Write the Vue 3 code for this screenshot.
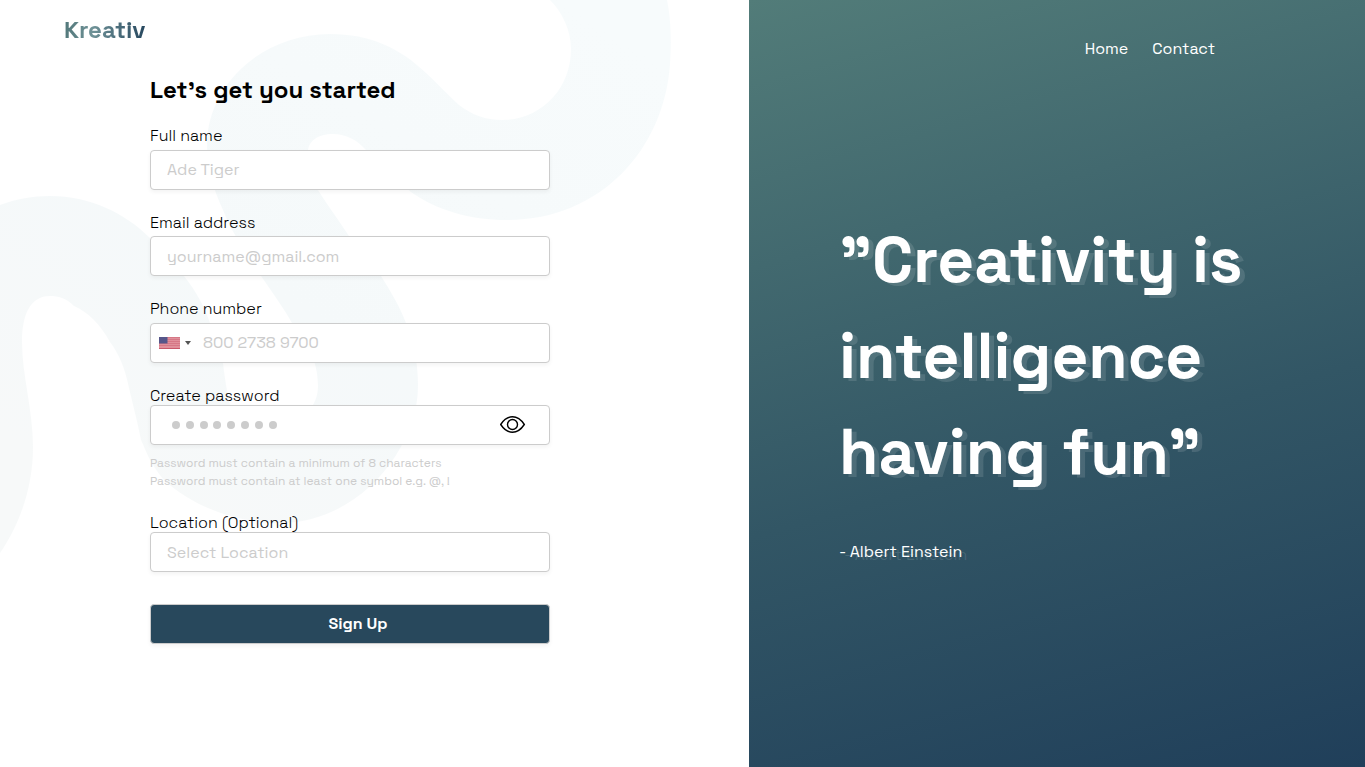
<script setup>
import { ref } from 'vue'

const fullName = ref('')
const email = ref('')
const phone = ref('')
const password = ref('')
const location = ref('')
const showPassword = ref(false)
</script>

<template>
  <div class="page">
    <section class="signup">
      <svg class="wave" width="749" height="767" viewBox="0 0 749 767" aria-hidden="true">
        <defs>
          <linearGradient id="waveFill" x1="560" y1="0" x2="200" y2="560" gradientUnits="userSpaceOnUse">
            <stop offset="0" stop-color="#f7fbfc" />
            <stop offset="0.6" stop-color="#f5f9fa" />
            <stop offset="1" stop-color="#f7f9f9" />
          </linearGradient>
        </defs>
        <path
          fill="url(#waveFill)"
          d="M0 205C16 199 33 196 50 196C90 196 125 213 150 238C163 250 175 262 184 276C196 291 204 306 210 323C216 336 220 350 223 363C225 380 227 392 230 405C236 420 250 423 275 423C305 423 318 405 318 386C318 358 305 340 292 323C285 310 272 292 261 276C245 252 231 231 223 210C214 190 207 170 207 145C207 85 262 34 330 34C370 34 400 48 426 73C440 86 446 93 459 105C472 115 486 120 502 120C540 120 571 90 571 49C571 30 562 12 550 0L667 0C670 15 672 35 670 64C664 150 600 220 507 220C470 220 436 210 411 192C395 180 380 163 366 150C356 139 345 134 333 134C318 134 308 141 308 152C308 165 313 180 318 190C328 206 340 222 349 236C360 250 372 264 381 276C391 292 400 307 406 323C414 342 418 364 418 386C418 447 360 523 280 523C235 523 190 505 163 479C148 460 146 450 141 440C137 420 133 405 129 388C125 368 119 354 110 342C100 324 88 312 74 306C66 298 58 296 50 296C30 296 22 315 22 342C22 375 33 410 33 447C33 490 18 527 0 553Z"
        />
      </svg>

      <header class="brand"><span class="logo">Kreativ</span></header>

      <form class="form" @submit.prevent>
        <h2 class="title">Let’s get you started</h2>

        <div class="field name">
          <label for="name">Full name</label>
          <div class="box"><input id="name" v-model="fullName" placeholder="Ade Tiger" /></div>
        </div>

        <div class="field email">
          <label for="email">Email address</label>
          <div class="box"><input id="email" v-model="email" placeholder="yourname@gmail.com" /></div>
        </div>

        <div class="field phone">
          <label for="phone">Phone number</label>
          <div class="box">
            <svg class="flag" width="21" height="12" viewBox="0 0 21 12" aria-hidden="true">
              <rect width="21" height="12" fill="#e0909b" />
              <path d="M0 .5H21M0 2.5H21M0 4.5H21M0 6.5H21M0 8.5H21" stroke="#d67886" />
              <path d="M0 11.5H21" stroke="#c9586b" />
              <rect width="8.5" height="6.5" fill="#56568a" />
            </svg>
            <span class="caret"></span>
            <input id="phone" v-model="phone" placeholder="800 2738 9700" />
          </div>
        </div>

        <div class="field password">
          <label for="password">Create password</label>
          <div class="box">
            <span class="dots"><i v-for="n in 8" :key="n"></i></span>
            <input id="password" v-model="password" :type="showPassword ? 'text' : 'password'" />
            <svg class="eye" width="26" height="18" viewBox="0 0 26 18" aria-hidden="true" @click="showPassword = !showPassword">
              <path d="M.7 8.5C4.2 3.2 8.1.8 12.5.8S20.8 3.2 24.3 8.5C20.8 13.8 16.9 16.2 12.5 16.2S4.2 13.8.7 8.5Z" />
              <circle cx="12.5" cy="8.5" r="5" />
            </svg>
          </div>
          <p class="hint">Password must contain a minimum of 8 characters</p>
          <p class="hint">Password must contain at least one symbol e.g. @, !</p>
        </div>

        <div class="field location">
          <label for="location">Location (Optional)</label>
          <div class="box"><input id="location" v-model="location" placeholder="Select Location" /></div>
        </div>

        <button class="submit" type="submit">Sign Up</button>
      </form>
    </section>

    <aside class="panel">
      <nav class="nav">
        <a>Home</a>
        <a>Contact</a>
      </nav>
      <h1 class="quote">
        <span>”Creativity is</span>
        <span>intelligence</span>
        <span>having fun”</span>
      </h1>
      <p class="author">- Albert Einstein</p>
    </aside>
  </div>
</template>

<style>
body {
  margin: 0;
  background: #fff;
}
</style>

<style scoped>
.page {
  display: flex;
  height: 767px;
  overflow: hidden;
  font-family: 'Space Grotesk', Inter, 'Liberation Sans', sans-serif;
  color: #000;
}
.signup {
  position: relative;
  width: 749px;
  flex: none;
}
.wave {
  position: absolute;
  top: 0;
  left: 0;
}
.brand,
.form {
  position: relative;
}
.brand {
  padding: 14px 0 0 64px;
  height: 60px;
  box-sizing: border-box;
}
.logo {
  display: inline-block;
  font-size: 24px;
  line-height: 32px;
  font-weight: 600;
  color: transparent;
  background: linear-gradient(90deg, #52787a, #6f9297 35%, #27485f);
  background-clip: text;
}
.form {
  width: 400px;
  margin-left: 150px;
}
.title {
  margin: 0;
  padding-top: 14px;
  height: 53px;
  font-size: 24px;
  line-height: 32px;
  font-weight: 600;
}
label {
  display: block;
  height: 18px;
  font-size: 16px;
  line-height: 18px;
  font-weight: 300;
  white-space: nowrap;
}
.name .box,
.phone .box {
  margin-top: 5px;
}
.email .box {
  margin-top: 4px;
}
.email,
.phone,
.password,
.location {
  margin-top: 24px;
}
.box {
  display: flex;
  align-items: center;
  box-sizing: border-box;
  height: 40px;
  padding: 0 16px;
  border: 1px solid #ccc;
  border-radius: 4px;
  background: #fff;
  box-shadow: 0 2px 4px rgba(0, 0, 0, 0.05);
}
.email .box,
.location .box {
  padding-top: 2px;
}
input {
  flex: 1;
  min-width: 0;
  padding: 0;
  border: 0;
  outline: 0;
  background: none;
  font: inherit;
  line-height: 20px;
  color: #333;
}
input::placeholder {
  color: #ccc;
  opacity: 1;
}
.phone .box {
  padding-left: 8px;
}
.caret {
  margin: 0 12px 0 5px;
  border: 3px solid transparent;
  border-top: 4px solid #555;
  border-bottom: 0;
}
.password .box {
  padding: 0 23px 0 21px;
}
.dots {
  display: flex;
  gap: 5.8px;
}
.dots i {
  width: 8px;
  height: 8px;
  border-radius: 50%;
  background: #ccc;
}
.eye {
  fill: none;
  stroke: #000;
  stroke-width: 1.4;
}
.hint {
  margin: 0;
  font-size: 12px;
  line-height: 18px;
  color: #ccc;
  white-space: nowrap;
}
.box + .hint {
  margin-top: 9px;
}
.submit {
  display: block;
  box-sizing: border-box;
  width: 400px;
  height: 40px;
  margin-top: 32px;
  padding: 0 0 0 16px;
  border: 1px solid #ccc;
  border-radius: 4px;
  background: #28485c;
  color: #fff;
  font: inherit;
  font-weight: 700;
  line-height: 20px;
  box-shadow: 0 2px 4px rgba(0, 0, 0, 0.05);
}
.panel {
  flex: 1;
  color: #fff;
  background: linear-gradient(164deg, #527c79 0%, #325665 57%, #203f5a 100%);
}
.nav {
  display: flex;
  justify-content: flex-end;
  gap: 24px;
  height: 212px;
  padding: 39px 150px 0 0;
  box-sizing: border-box;
  font-size: 16px;
  line-height: 20px;
}
.quote {
  display: flex;
  flex-direction: column;
  margin: 0 0 0 90px;
  font-size: 64px;
  line-height: 96px;
  font-weight: 700;
  white-space: nowrap;
  text-shadow: 5px 3px 0 rgba(255, 255, 255, 0.12);
}
.author {
  margin: 42px 0 0 90px;
  font-size: 16px;
  line-height: 20px;
  text-shadow: 5px 3px 0 rgba(255, 255, 255, 0.12);
}
</style>
